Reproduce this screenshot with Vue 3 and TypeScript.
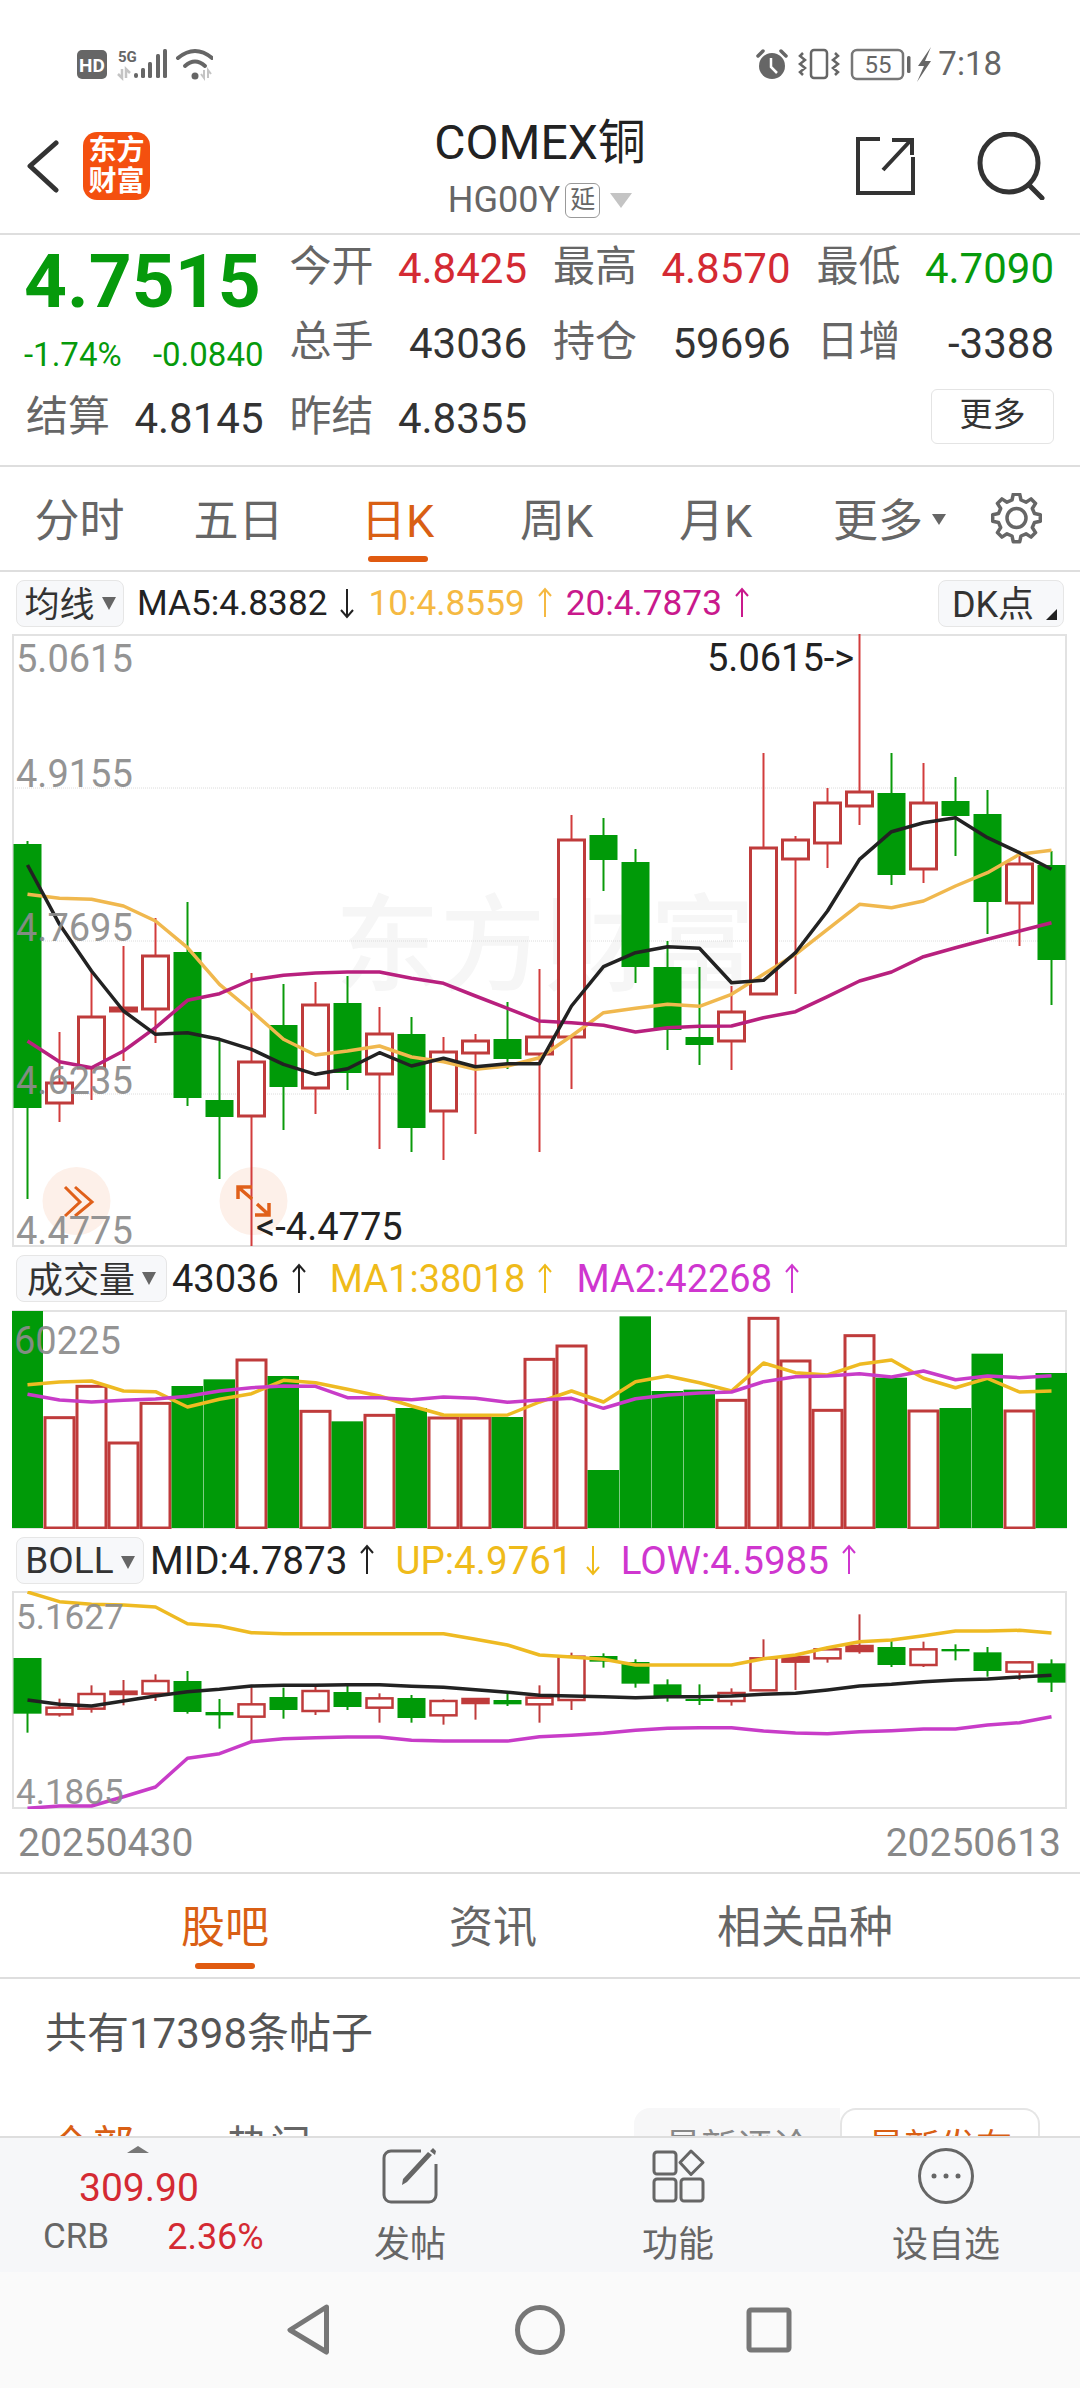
<script setup lang="ts">
const xc = (i: number) => 27.5 + 32 * i
const z3 = (p: number) => 800 + p / 3
const z4 = (p: number) => 1240 + p / 3
const z5 = (p: number) => 1530 + p / 3
const line = (ys: number[], f: (p: number) => number) =>
  ys.map((p, i) => `${xc(i)},${f(p).toFixed(1)}`).join(' ')

interface Candle { i: number; up: boolean; x: number; wt: number; wb: number; y: number; h: number; solid: boolean }
type Raw = [string, number, number, number, number]
const toCandles = (rows: Raw[], f: (p: number) => number): Candle[] =>
  rows.map((r, i) => {
    const y = f(r[2])
    const h = f(r[3]) - y
    return { i, up: r[0] === 'r', x: xc(i), wt: f(r[1]), wb: f(r[4]), y, h, solid: h < 6 }
  })

const mainRaw: Raw[] = [
  ['g', 840, 843, 1107, 1198], ['r', 1031, 1082, 1102, 1121], ['r', 971, 1016, 1067, 1099], ['r', 945, 1007, 1010, 1060],
  ['r', 917, 955, 1008, 1042], ['g', 901, 951, 1097, 1105], ['g', 1040, 1099, 1116, 1178], ['r', 972, 1061, 1115, 1245],
  ['g', 983, 1024, 1086, 1129], ['r', 981, 1004, 1087, 1113], ['g', 975, 1002, 1072, 1089], ['r', 1006, 1033, 1073, 1148],
  ['g', 1016, 1033, 1127, 1151], ['r', 1036, 1051, 1110, 1159], ['r', 1033, 1040, 1052, 1133], ['g', 1001, 1038, 1058, 1068],
  ['r', 968, 1036, 1053, 1151], ['r', 814, 839, 1036, 1088], ['g', 817, 834, 859, 890], ['g', 848, 861, 966, 982],
  ['g', 940, 966, 1029, 1049], ['g', 966, 1036, 1044, 1064], ['r', 985, 1011, 1040, 1069], ['r', 752, 847, 993, 993],
  ['r', 835, 839, 858, 993], ['r', 787, 802, 842, 867], ['r', 633, 791, 805, 824], ['g', 752, 792, 874, 884],
  ['r', 762, 802, 868, 882], ['g', 776, 800, 815, 855], ['g', 789, 813, 901, 933], ['r', 850, 863, 902, 945],
  ['g', 850, 864, 959, 1004],
]
const mainCandles = toCandles(mainRaw, (p) => p)
const ma5 = line([192, 370, 510, 630, 700, 695, 715, 745, 790, 820, 803, 755, 795, 772, 797, 788, 788, 615, 497, 455, 437, 442, 545, 538, 455, 330, 175, 92, 65, 50, 110, 155, 205], z3)
const ma10 = line([280, 292, 295, 315, 360, 440, 550, 630, 715, 762, 750, 735, 768, 782, 805, 795, 770, 705, 635, 622, 610, 616, 580, 520, 460, 385, 310, 320, 300, 255, 215, 160, 148], z3)
const ma20 = line([720, 782, 800, 750, 680, 598, 578, 537, 523, 516, 513, 513, 532, 547, 585, 622, 660, 665, 673, 693, 680, 676, 675, 650, 632, 587, 540, 513, 467, 440, 415, 390, 365], z3)

const volTops: [string, number][] = [
  ['g', 210], ['r', 527], ['r', 433], ['r', 603], ['r', 484], ['g', 435], ['g', 415], ['r', 354], ['g', 405], ['r', 508], ['g', 541],
  ['r', 520], ['g', 501], ['r', 528], ['r', 528], ['g', 528], ['r', 352], ['r', 312], ['g', 687], ['g', 226], ['g', 450], ['g', 446],
  ['r', 475], ['r', 229], ['r', 357], ['r', 505], ['r', 281], ['g', 410], ['r', 507], ['g', 501], ['g', 338], ['r', 507], ['g', 396],
]
const volBars = volTops.map(([c, t], i) => ({ i, up: c === 'r', x: xc(i) - 15.5, y: z4(t) }))
const volMa1 = line([431, 423, 420, 450, 452, 498, 475, 458, 418, 425, 445, 465, 495, 522, 523, 522, 483, 450, 483, 422, 405, 425, 450, 366, 395, 402, 370, 357, 412, 440, 412, 453, 450], z4)
const volMa2 = line([460, 477, 483, 478, 474, 466, 450, 440, 435, 436, 470, 470, 476, 468, 472, 484, 477, 472, 502, 473, 462, 456, 453, 422, 407, 405, 398, 408, 390, 416, 405, 410, 404], z4)

const bollRaw: Raw[] = [
  ['g', 381, 381, 548, 605], ['r', 503, 530, 550, 557], ['r', 463, 489, 533, 545], ['r', 447, 482, 489, 523], ['r', 430, 450, 488, 510],
  ['g', 420, 450, 543, 548], ['g', 504, 543, 553, 593], ['r', 463, 520, 557, 632], ['g', 470, 498, 537, 563], ['r', 468, 480, 540, 552],
  ['g', 465, 483, 528, 537], ['r', 487, 502, 530, 575], ['g', 492, 501, 561, 575], ['r', 505, 510, 553, 581], ['r', 503, 504, 516, 566],
  ['g', 483, 507, 520, 525], ['r', 463, 500, 520, 575], ['r', 365, 377, 507, 537], ['g', 367, 375, 392, 410], ['g', 385, 393, 458, 470],
  ['g', 445, 460, 500, 512], ['g', 460, 504, 510, 522], ['r', 472, 486, 510, 524], ['r', 325, 382, 478, 480], ['r', 372, 378, 392, 477],
  ['r', 347, 355, 382, 395], ['r', 250, 345, 360, 368], ['g', 325, 348, 402, 408], ['r', 332, 355, 402, 408], ['g', 340, 354, 361, 388],
  ['g', 348, 364, 420, 437], ['r', 390, 394, 422, 447], ['g', 385, 397, 455, 483],
]
const bollCandles = toCandles(bollRaw, z5)
const bollUp = line([183, 212, 220, 222, 228, 278, 285, 305, 308, 308, 308, 308, 308, 308, 325, 342, 372, 378, 385, 402, 402, 402, 402, 383, 372, 350, 332, 327, 314, 300, 300, 298, 306], z5)
const bollMid = line([507, 520, 525, 510, 495, 482, 475, 465, 463, 463, 461, 461, 466, 469, 476, 484, 493, 495, 497, 500, 497, 497, 495, 490, 487, 477, 465, 460, 452, 447, 444, 438, 433], z5)
const bollLow = line([832, 825, 825, 797, 768, 682, 668, 632, 623, 620, 618, 618, 628, 630, 630, 630, 617, 613, 607, 598, 592, 590, 590, 600, 606, 608, 602, 599, 594, 594, 582, 575, 557], z5)

const mainLabels = [
  { t: '5.0615', top: 3 }, { t: '4.9155', top: 118 }, { t: '4.7695', top: 272 }, { t: '4.6235', top: 425 }, { t: '4.4775', top: 575 },
]
const bollLabels = [{ t: '5.1627', top: 5 }, { t: '4.1865', top: 180 }]

const gearPath = (() => {
  const cx = 1019.5, cy = 518, R = 24, r = 18.5, n = 8
  const pts: string[] = []
  for (let k = 0; k < n; k++) {
    const a = (k * 2 * Math.PI) / n - Math.PI / 2
    const w = Math.PI / n
    const at = (rad: number, ang: number) => `${(cx + rad * Math.cos(ang)).toFixed(1)} ${(cy + rad * Math.sin(ang)).toFixed(1)}`
    pts.push(at(r, a - w * 0.62), at(R, a - w * 0.34), at(R, a + w * 0.34), at(r, a + w * 0.62))
  }
  return 'M' + pts.join('L') + 'Z'
})()

const quotes1 = [
  { l: '今开', v: '4.8425', c: 'red' }, { l: '最高', v: '4.8570', c: 'red' }, { l: '最低', v: '4.7090', c: 'green' },
]
const quotes2 = [
  { l: '总手', v: '43036', c: 'dark' }, { l: '持仓', v: '59696', c: 'dark' }, { l: '日增', v: '-3388', c: 'dark' },
]
const periods = ['分时', '五日', '日K', '周K', '月K']

const legendMa = [
  { t: 'MA5:4.8382', c: 'c-dark', d: 'down' }, { t: '10:4.8559', c: 'c-orange', d: 'up' }, { t: '20:4.7873', c: 'c-rose', d: 'up' },
]
const legendVol = [
  { t: '43036', c: 'c-dark', d: 'up' }, { t: 'MA1:38018', c: 'c-yellow', d: 'up' }, { t: 'MA2:42268', c: 'c-purple', d: 'up' },
]
const legendBoll = [
  { t: 'MID:4.7873', c: 'c-dark', d: 'up' }, { t: 'UP:4.9761', c: 'c-yellow', d: 'down' }, { t: 'LOW:4.5985', c: 'c-purple', d: 'up' },
]
</script>

<template>
  <div class="page">
    <div class="status">
      <svg class="st-left" viewBox="77 44 136 40" width="136" height="40">
        <rect x="77" y="50" width="30" height="29" rx="5" fill="#666" />
        <text x="92" y="71.500" text-anchor="middle" class="st-hd">HD</text>
        <text x="118" y="62" class="st-5g">5G</text>
        <g fill="#666">
          <rect x="134" y="73" width="4" height="5" rx="2" />
          <rect x="141" y="68" width="4" height="10" rx="1.500" />
          <rect x="148" y="62" width="4" height="16" rx="1.500" />
          <rect x="156" y="54" width="4" height="24" rx="1.500" />
          <rect x="163" y="49" width="4" height="29" rx="1.500" />
        </g>
        <path d="M122 69v9l-4-4M126 78v-9l4 4" fill="none" stroke="#c4c4c4" stroke-width="2.500" />
        <g fill="none" stroke="#666" stroke-width="4" stroke-linecap="round">
          <path d="M178 58Q195 44 212 58" />
          <path d="M185 66Q195 57 205 66" />
        </g>
        <circle cx="195" cy="76" r="3.500" fill="#666" />
        <path d="M204 70v8l-3-4M208 78v-8l3 4" fill="none" stroke="#c4c4c4" stroke-width="2" />
      </svg>
      <div class="st-right">
        <svg viewBox="756 44 178 40" width="178" height="40">
          <circle cx="772" cy="66" r="13" fill="#666" />
          <path d="M771 58v9l6 6" fill="none" stroke="#fff" stroke-width="2.500" />
          <path d="M758 56l5-5M786 56l-5-5" stroke="#666" stroke-width="3.500" stroke-linecap="round" />
          <rect x="811" y="50" width="16" height="28" rx="3" fill="none" stroke="#666" stroke-width="2.500" />
          <path d="M803 53l-3 3 5 4-5 4 5 4-5 4 3 3M835 53l3 3-5 4 5 4-5 4 5 4-3 3" fill="none" stroke="#666" stroke-width="2.500" />
          <rect x="852" y="50" width="51" height="29" rx="5" fill="none" stroke="#777" stroke-width="2.500" />
          <text x="878" y="73" text-anchor="middle" class="st-batt">55</text>
          <rect x="907" y="56" width="3.500" height="17" rx="1.500" fill="#666" />
          <path d="M931 47L918 66h6l-7 16 14-21h-6z" fill="#666" />
        </svg>
        <span class="st-time">7:18</span>
      </div>
    </div>

    <header class="head">
      <div class="head-left">
        <svg viewBox="27 132 32 68" width="32" height="68">
          <path d="M56 143L30 166L56 190" fill="none" stroke="#333" stroke-width="5" stroke-linecap="round" stroke-linejoin="round" />
        </svg>
        <div class="logo"><span>东方</span><span>财富</span></div>
      </div>
      <div class="head-mid">
        <div class="title">COMEX铜</div>
        <div class="sub">
          <span>HG00Y</span>
          <span class="delay">延</span>
          <span class="tri tri-sub"></span>
        </div>
      </div>
      <div class="head-right">
        <svg viewBox="857 132 59 68" width="59" height="68">
          <path d="M881 139H859V193H914V157M884 170L912 140M893 140H913V155" fill="none" stroke="#333" stroke-width="4" />
        </svg>
        <svg viewBox="978 132 68 68" width="68" height="68">
          <circle cx="1010" cy="163" r="29" fill="none" stroke="#333" stroke-width="5" />
          <path d="M1030 185L1043 198" stroke="#333" stroke-width="5" stroke-linecap="round" />
        </svg>
      </div>
    </header>

    <section class="quote">
      <div class="q-price">
        <div class="price">4.7515</div>
        <div class="change"><span>-1.74%</span><span>-0.0840</span></div>
      </div>
      <div v-for="q in quotes1" :key="q.l" class="q-cell">
        <span class="q-l">{{ q.l }}</span><span :class="['q-v', q.c]">{{ q.v }}</span>
      </div>
      <div v-for="q in quotes2" :key="q.l" class="q-cell">
        <span class="q-l">{{ q.l }}</span><span :class="['q-v', q.c]">{{ q.v }}</span>
      </div>
      <div class="q-cell"><span class="q-l">结算</span><span class="q-v dark">4.8145</span></div>
      <div class="q-cell"><span class="q-l">昨结</span><span class="q-v dark">4.8355</span></div>
      <div class="q-cell q-empty"></div>
      <div class="q-cell q-end"><span class="more-btn">更多</span></div>
    </section>

    <nav class="tabs periods">
      <div v-for="p in periods" :key="p" :class="['tab', { active: p === '日K' }]">
        <span class="tab-t">{{ p }}</span>
        <i v-if="p === '日K'" class="ind"></i>
      </div>
      <div class="tab-more"><span class="tab-t">更多</span><span class="tri tri-more"></span></div>
      <svg class="gear" viewBox="994 493 51 51" width="51" height="51">
        <path :d="gearPath" fill="none" stroke="#666" stroke-width="3.500" stroke-linejoin="round" />
        <circle cx="1019.500" cy="518" r="9.500" fill="none" stroke="#666" stroke-width="3.500" />
      </svg>
    </nav>

    <div class="legend leg-ma">
      <span class="lg-btn btn-ma">均线<span class="tri tri-btn"></span></span>
      <span v-for="l in legendMa" :key="l.t" :class="['lg-item', l.c]">{{ l.t }}
        <svg :class="['arr', l.d]" viewBox="0 0 20 32" width="20" height="32"><path d="M10 2V30M4 9L10 2L16 9" /></svg>
      </span>
      <span class="lg-btn btn-dk">DK点<i class="corner"></i></span>
    </div>

    <div class="chart ch-main">
      <div class="watermark">东方财富</div>
      <svg class="ch-svg" viewBox="12 633 1055 613" width="1055" height="613">
        <rect x="13" y="634" width="1053" height="611" fill="none" stroke="#e2e2e2" stroke-width="2" />
        <g stroke="#dcdcdc" stroke-width="1" stroke-dasharray="1 1">
          <path d="M13 787H1066M13 940H1066M13 1093H1066" />
        </g>
        <circle cx="76.500" cy="1200" r="34" fill="#fdf0e9" />
        <circle cx="253.500" cy="1200" r="34" fill="#fdf0e9" />
        <g v-for="c in mainCandles" :key="c.i">
          <path :d="`M${c.x} ${c.wt}V${c.wb}`" :stroke="c.up ? '#d23c3c' : '#0a9a0a'" stroke-width="2" />
          <rect v-if="c.up" :x="c.x - 13" :y="c.y" width="26" :height="c.h" :fill="c.solid ? '#bf3b3b' : '#fff'" stroke="#bf3b3b" stroke-width="3" />
          <rect v-else :x="c.x - 14" :y="c.y" width="28" :height="c.h" fill="#009a08" />
        </g>
        <g fill="none" stroke-width="3.500" stroke-linejoin="round">
          <polyline :points="ma10" stroke="#f0b84e" />
          <polyline :points="ma20" stroke="#b8207e" />
          <polyline :points="ma5" stroke="#222" />
        </g>
        <g fill="none" stroke="#e0601a" stroke-width="3">
          <path d="M65 1186L80 1201L65 1215M75 1186L92 1201L75 1215" />
          <path d="M252 1186H238V1198M238 1186L252 1198M255 1214H269V1202M269 1214L257 1203" stroke-width="3.500" />
        </g>
      </svg>
      <span v-for="l in mainLabels" :key="l.t" class="scale" :style="{ top: l.top + 'px' }">{{ l.t }}</span>
      <span class="note note-hi">5.0615-&gt;</span>
      <span class="note note-lo">&lt;-4.4775</span>
    </div>

    <div class="legend leg-big">
      <span class="lg-btn btn-vol">成交量<span class="tri tri-btn"></span></span>
      <span v-for="l in legendVol" :key="l.t" :class="['lg-item', l.c]">{{ l.t }}
        <svg :class="['arr', l.d]" viewBox="0 0 20 32" width="20" height="32"><path d="M10 2V30M4 9L10 2L16 9" /></svg>
      </span>
    </div>

    <div class="chart ch-vol">
      <svg class="ch-svg" viewBox="12 1309 1055 219" width="1055" height="219">
        <rect x="13" y="1310" width="1053" height="217" fill="none" stroke="#e2e2e2" stroke-width="2" />
        <g v-for="b in volBars" :key="b.i">
          <rect v-if="b.up" :x="b.x + 1" :y="b.y + 1" width="29" :height="1526 - b.y" fill="#fff" stroke="#bf3b3b" stroke-width="3" />
          <rect v-else :x="b.x - 0.5" :y="b.y" width="31.500" :height="1527 - b.y" fill="#009a08" />
        </g>
        <g fill="none" stroke-width="3.500" stroke-linejoin="round">
          <polyline :points="volMa1" stroke="#eeba22" />
          <polyline :points="volMa2" stroke="#c83cc8" />
        </g>
      </svg>
      <span class="scale scale-vol">60225</span>
    </div>

    <div class="legend leg-big leg-boll">
      <span class="lg-btn btn-boll">BOLL<span class="tri tri-btn"></span></span>
      <span v-for="l in legendBoll" :key="l.t" :class="['lg-item', l.c]">{{ l.t }}
        <svg :class="['arr', l.d]" viewBox="0 0 20 32" width="20" height="32"><path d="M10 2V30M4 9L10 2L16 9" /></svg>
      </span>
    </div>

    <div class="chart ch-boll">
      <svg class="ch-svg" viewBox="12 1590 1055 218" width="1055" height="218">
        <rect x="13" y="1591" width="1053" height="216" fill="none" stroke="#e2e2e2" stroke-width="2" />
        <g v-for="c in bollCandles" :key="c.i">
          <path :d="`M${c.x} ${c.wt}V${c.wb}`" :stroke="c.up ? '#bf3b3b' : '#0a9a0a'" stroke-width="2" />
          <rect v-if="c.up" :x="c.x - 13" :y="c.y" width="26" :height="c.h" :fill="c.solid ? '#bf3b3b' : '#fff'" stroke="#bf3b3b" stroke-width="2.500" />
          <rect v-else :x="c.x - 14" :y="c.y" width="28" :height="c.h" fill="#009a08" />
        </g>
        <g fill="none" stroke-width="3.500" stroke-linejoin="round">
          <polyline :points="bollUp" stroke="#eeba22" />
          <polyline :points="bollMid" stroke="#222" />
          <polyline :points="bollLow" stroke="#c83cc8" />
        </g>
      </svg>
      <span v-for="l in bollLabels" :key="l.t" class="scale scale-boll" :style="{ top: l.top + 'px' }">{{ l.t }}</span>
    </div>

    <div class="dates"><span>20250430</span><span>20250613</span></div>

    <nav class="tabs subtabs">
      <div class="tab2 active"><span class="tab-t">股吧</span><i class="ind"></i></div>
      <div class="tab2"><span class="tab-t">资讯</span></div>
      <div class="tab2"><span class="tab-t">相关品种</span></div>
    </nav>

    <section class="posts">
      <div class="count">共有17398条帖子</div>
      <div class="filter">
        <div class="filter-left"><span class="f-on">全部</span><span class="f-off">热门</span></div>
        <div class="seg">
          <span class="seg-a">最新评论</span>
          <span class="seg-b">最新发布</span>
        </div>
      </div>
    </section>

    <footer class="bar">
      <div class="crb">
        <i class="crb-tri"></i>
        <div class="crb-price">309.90</div>
        <div class="crb-row"><span class="crb-name">CRB</span><span class="crb-pct">2.36%</span></div>
      </div>
      <div class="bar-item">
        <svg viewBox="380 2148 60 56" width="60" height="56">
          <path d="M421 2151H391a7 7 0 0 0-7 7V2195a7 7 0 0 0 7 7H429a7 7 0 0 0 7-7V2164" fill="none" stroke="#666" stroke-width="3" />
          <path d="M432 2155l-25 27-5 3 1-6 25-27zM430 2151l3-3 3 3-1 4z" fill="#666" />
        </svg>
        <span>发帖</span>
      </div>
      <div class="bar-item">
        <svg viewBox="648 2148 60 56" width="60" height="56">
          <g fill="none" stroke="#666" stroke-width="3">
            <rect x="654" y="2152" width="22" height="22" rx="3" />
            <path d="M691 2151l12 11.500-12 12-11-12z" stroke-linejoin="round" />
            <rect x="654" y="2179" width="22" height="22" rx="3" />
            <rect x="681" y="2179" width="22" height="22" rx="3" />
          </g>
        </svg>
        <span>功能</span>
      </div>
      <div class="bar-item">
        <svg viewBox="916 2148 60 56" width="60" height="56">
          <circle cx="946" cy="2176" r="26.500" fill="none" stroke="#666" stroke-width="3" />
          <circle cx="934" cy="2176" r="2.500" fill="#666" />
          <circle cx="946" cy="2176" r="2.500" fill="#666" />
          <circle cx="958" cy="2176" r="2.500" fill="#666" />
        </svg>
        <span>设自选</span>
      </div>
    </footer>

    <div class="navbar">
      <svg viewBox="284 2302 50 56" width="50" height="56">
        <path d="M326.500 2307L290 2330L326.500 2352Z" fill="none" stroke="#777" stroke-width="5" stroke-linejoin="round" />
      </svg>
      <svg viewBox="512 2302 56 56" width="56" height="56">
        <circle cx="540" cy="2330" r="22.500" fill="none" stroke="#777" stroke-width="5" />
      </svg>
      <svg viewBox="742 2302 54 56" width="54" height="56">
        <rect x="749" y="2310" width="40" height="40" rx="2" fill="none" stroke="#777" stroke-width="5" />
      </svg>
    </div>
  </div>
</template>

<style scoped>
.page {
  width: 1080px;
  height: 2388px;
  overflow: hidden;
  background: #fff;
  font-family: Roboto, "Noto Sans CJK SC", sans-serif;
  color: #333;
  box-sizing: border-box;
}
svg { display: block; flex: none; }
.status {
  height: 110px;
  box-sizing: border-box;
  padding: 44px 78px 0 77px;
  display: flex;
  justify-content: space-between;
  align-items: flex-start;
}
.st-hd { font: 700 19px Roboto, sans-serif; fill: #fff; }
.st-5g { font: 700 15px Roboto, sans-serif; fill: #666; }
.st-batt { font: 400 24px Roboto, sans-serif; fill: #666; }
.st-right { display: flex; align-items: center; height: 40px; }
.st-time { margin-left: 4px; font-size: 33px; line-height: 40px; color: #666; }

.head {
  height: 125px;
  box-sizing: border-box;
  border-bottom: 2px solid #dedede;
  display: grid;
  grid-template-columns: 1fr auto 1fr;
  align-items: start;
}
.head-left { display: flex; padding: 22px 0 0 27px; gap: 24px; }
.logo {
  width: 67px;
  height: 68px;
  border-radius: 14px;
  background: #f4500f;
  color: #fff;
  font-size: 28px;
  font-weight: 700;
  line-height: 31px;
  display: flex;
  flex-direction: column;
  align-items: center;
  justify-content: center;
}
.head-mid { display: flex; flex-direction: column; align-items: center; padding-top: 8px; }
.title { font-size: 48px; line-height: 50px; color: #222; }
.sub { margin-top: 12px; display: flex; align-items: center; height: 40px; font-size: 36px; color: #666; }
.delay {
  margin-left: 5px;
  width: 35px;
  height: 35px;
  box-sizing: border-box;
  border: 1.5px solid #999;
  border-radius: 6px;
  font-size: 25px;
  line-height: 31px;
  text-align: center;
}
.tri { display: inline-block; width: 0; height: 0; border-style: solid; border-color: #666 transparent transparent; }
.tri-sub { margin-left: 10px; border-width: 15px 11px 0; border-top-color: #c4c4c4; }
.head-right { display: flex; justify-content: flex-end; padding: 22px 35px 0 0; gap: 62px; }

.quote {
  height: 232px;
  box-sizing: border-box;
  border-bottom: 2px solid #dedede;
  padding: 0 26px;
  display: grid;
  grid-template-columns: repeat(4, minmax(0, 1fr));
  grid-template-rows: 66px 66px 66px;
  column-gap: 26px;
  row-gap: 9px;
}
.q-price { grid-row: 1 / 3; grid-column: 1; }
.price { height: 90px; line-height: 92px; font-size: 75px; font-weight: 700; color: #069a0c; margin-left: -2px; white-space: nowrap; }
.change { margin-top: 4px; height: 52px; line-height: 52px; display: flex; justify-content: space-between; font-size: 33px; color: #069a0c; margin-left: -2px; }
.q-cell { display: flex; justify-content: space-between; align-items: center; }
.q-l { font-size: 42px; color: #666; line-height: 60px; margin-top: -2px; }
.q-v { font-size: 42px; }
.red { color: #d42a33; }
.green { color: #069a0c; }
.dark { color: #333; }
.q-end { justify-content: flex-end; }
.more-btn {
  width: 123px;
  height: 55px;
  box-sizing: border-box;
  border: 1.5px solid #e4e4e4;
  border-radius: 6px;
  text-align: center;
  line-height: 50px;
  font-size: 33px;
  color: #333;
  margin-top: -4px;
}

.tabs { box-sizing: border-box; display: flex; align-items: flex-start; padding-top: 25px; }
.periods { height: 105px; border-bottom: 2px solid #dedede; }
.tab { width: 159px; display: flex; flex-direction: column; align-items: center; }
.tab-t { font-size: 45px; line-height: 60px; color: #666; white-space: nowrap; }
.active .tab-t { color: #d95f14; }
.ind { display: block; width: 60px; height: 6px; margin-top: 4px; border-radius: 3px; background: #e05a10; }
.tab-more { margin-left: 38px; display: flex; align-items: center; height: 60px; }
.tri-more { margin: -6px 0 0 9px; border-width: 11px 7px 0; border-top-color: #666; }
.gear { margin: 1px 0 0 45px; }

.legend { display: flex; align-items: center; padding-left: 16px; box-sizing: border-box; white-space: nowrap; }
.leg-ma { height: 62px; gap: 11px; font-size: 35.2px; }
.leg-big { height: 63px; gap: 21px; font-size: 38px; }
.leg-boll { height: 62px; gap: 18px; font-size: 38.600px; }
.lg-btn {
  height: 47px;
  box-sizing: border-box;
  background: #f7f8fa;
  border: 1.5px solid #e6e6e6;
  border-radius: 8px;
  color: #333;
  display: flex;
  align-items: center;
  justify-content: center;
  position: relative;
  padding-bottom: 4px;
}
.btn-ma { width: 108px; font-size: 35px; margin-right: 2px; }
.btn-vol { width: 151px; font-size: 36px; margin-right: -16px; }
.btn-boll { width: 128px; font-size: 37px; margin-right: -12px; padding-bottom: 0; }
.btn-dk { width: 126px; font-size: 36px; padding-right: 16px; margin-left: auto; margin-right: 16px; }
.tri-btn { margin: 4px 0 0 7px; border-width: 13px 7px 0; border-top-color: #666; }
.corner { position: absolute; right: 6px; bottom: 6px; width: 0; height: 0; border-left: 11px solid transparent; border-bottom: 11px solid #222; }
.lg-item { display: flex; align-items: center; }
.arr { margin-left: 10px; fill: none; stroke: currentColor; stroke-width: 2; }
.arr.down { transform: rotate(180deg); }
.c-dark { color: #222; }
.c-orange { color: #f5b942; }
.c-rose { color: #c9198c; }
.c-yellow { color: #efbb1a; }
.c-purple { color: #cf36cf; }

.chart { position: relative; margin-left: 12px; width: 1055px; }
.ch-main { height: 613px; }
.ch-vol { height: 219px; }
.ch-boll { height: 218px; }
.ch-svg { position: relative; }
.watermark {
  position: absolute;
  left: 323px;
  top: 250px;
  font-size: 105px;
  line-height: 125px;
  font-weight: 500;
  color: #f6f6f6;
  white-space: nowrap;
}
.scale {
  position: absolute;
  left: 4px;
  font-size: 38px;
  line-height: 44px;
  color: #8c8c8c;
  opacity: 0.92;
}
.scale-vol { left: 2px; top: 9px; }
.scale-boll { font-size: 35px; }
.note { position: absolute; font-size: 38px; line-height: 44px; color: #222; white-space: nowrap; }
.note-hi { left: 695px; top: 2px; }
.note-lo { left: 244px; top: 571px; }

.dates {
  height: 65px;
  box-sizing: border-box;
  border-bottom: 2px solid #dedede;
  padding: 12px 19px 0 18px;
  display: flex;
  justify-content: space-between;
  font-size: 39px;
  line-height: 44px;
  color: #888;
}
.subtabs { height: 105px; padding-left: 181px; gap: 180px; border-bottom: 2px solid #dedede; padding-top: 24px; }
.tab2 { display: flex; flex-direction: column; align-items: center; }
.tab2 .tab-t { font-size: 44px; }
.tab2 .ind { margin-top: 5px; }

.posts { height: 157px; overflow: hidden; }
.count { padding: 30px 0 0 45px; font-size: 42px; line-height: 50px; color: #555; }
.filter { margin-top: 49px; display: flex; padding-left: 50px; }
.filter-left { padding-top: 14px; display: flex; gap: 93px; font-size: 42px; line-height: 50px; }
.f-on { color: #d95f14; }
.f-off { color: #666; }
.seg { margin-left: auto; margin-right: 40px; display: flex; width: 406px; height: 70px; font-size: 36px; line-height: 46px; }
.seg-a { width: 206px; padding-top: 17px; box-sizing: border-box; text-align: center; background: #f7f7f8; color: #888; border-radius: 16px 0 0 0; }
.seg-b { width: 200px; padding-top: 15px; box-sizing: border-box; text-align: center; color: #d95f14; border: 2px solid #e5e5e5; border-bottom: 0; border-radius: 16px 16px 0 0; }

.bar {
  height: 136px;
  box-sizing: border-box;
  background: #f6f7f9;
  border-top: 2px solid #dedede;
  display: flex;
}
.crb { width: 276px; box-sizing: border-box; padding: 8px 0 0 43px; }
.crb-tri { display: block; margin-left: 84px; width: 0; height: 0; border-style: solid; border-width: 0 11px 7px; border-color: transparent transparent #777; }
.crb-price { margin: 13px 0 0 36px; font-size: 39px; line-height: 44px; color: #d42a33; }
.crb-row { margin-top: 5px; display: flex; gap: 58px; line-height: 44px; }
.crb-name { font-size: 35px; color: #666; }
.crb-pct { font-size: 36px; color: #d42a33; }
.bar-item { width: 268px; box-sizing: border-box; padding-top: 10px; display: flex; flex-direction: column; align-items: center; font-size: 36px; color: #666; }
.bar-item span { margin-top: 19px; line-height: 44px; }

.navbar { height: 116px; background: #fafafa; position: relative; display: flex; box-sizing: border-box; padding: 30px 0 0 284px; }
.navbar svg:nth-child(2) { margin-left: 178px; }
.navbar svg:nth-child(3) { margin-left: 174px; }
</style>

<style>
html, body { margin: 0; background: #fff; }
</style>
